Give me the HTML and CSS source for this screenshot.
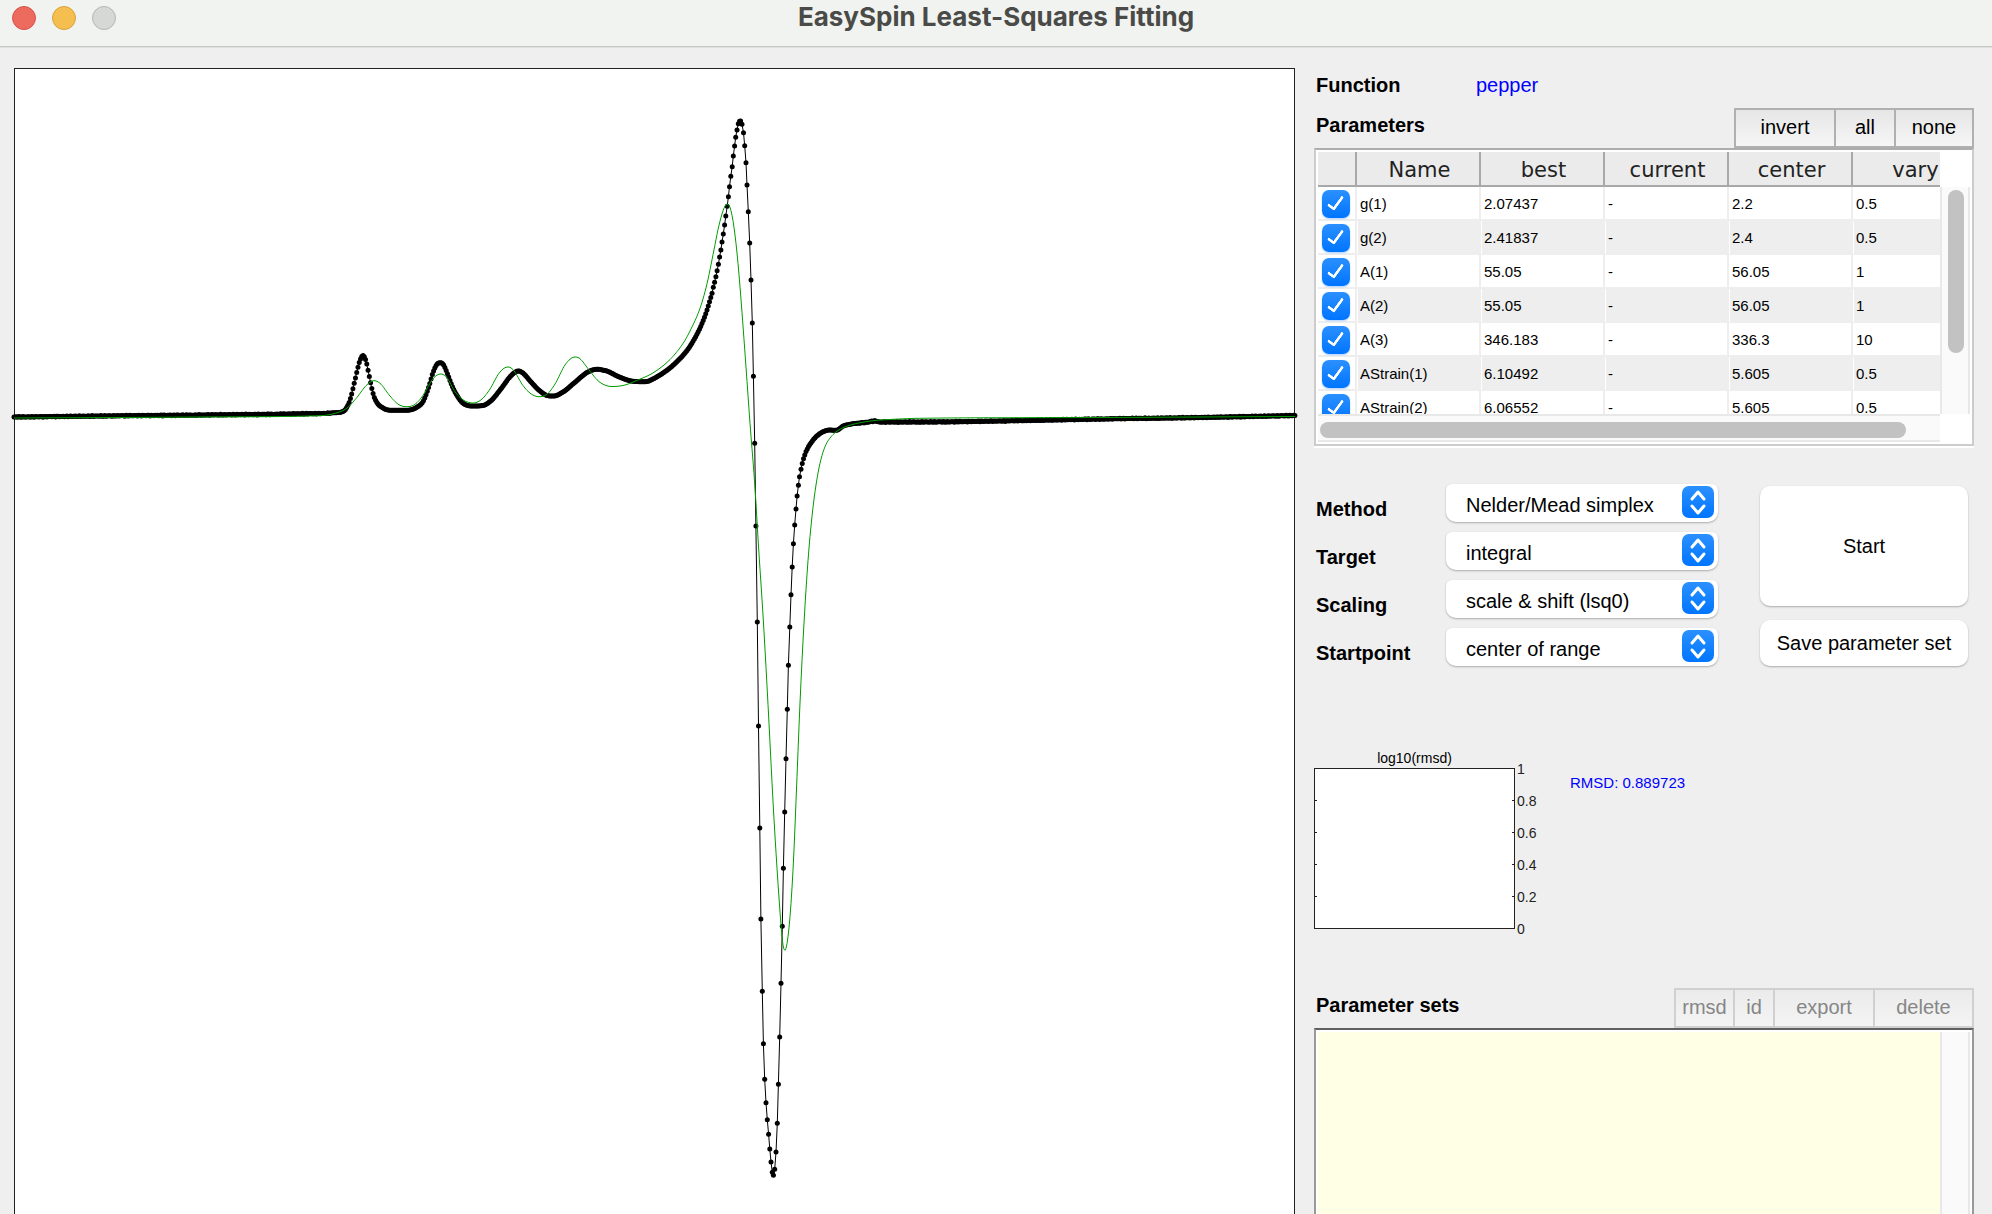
FILE: index.html
```html
<!DOCTYPE html>
<html lang="en">
<head>
    <meta charset="UTF-8">
    <title>EasySpin Least-Squares Fitting</title>
    <link rel="stylesheet" href="styles.css">
</head>
<body>
    <header class="titlebar">
        <div class="lights">
            <span class="light red"></span>
            <span class="light yellow"></span>
            <span class="light grey"></span>
        </div>
        <h1>EasySpin Least-Squares Fitting</h1>
    </header>

    <main class="window">
        <section class="plot">
            <svg id="spectrum" viewBox="15 69 1279 1145"></svg>
        </section>

        <section class="panel">
            <div class="function-row">
                <h2>Function</h2>
                <a href="#">pepper</a>
            </div>

            <div class="toolbar">
                <h2>Parameters</h2>
                <div class="buttons">
                    <button type="button" class="w-invert">invert</button>
                    <button type="button" class="w-all">all</button>
                    <button type="button" class="w-none">none</button>
                </div>
            </div>
            <div class="table-frame">
                <div class="table-view">
                    <table>
                        <colgroup>
                            <col class="col-check">
                            <col span="5" class="col-value">
                        </colgroup>
                        <thead>
                            <tr><th></th><th>Name</th><th>best</th><th>current</th><th>center</th><th>vary</th></tr>
                        </thead>
                        <tbody>
                            <tr><td><input type="checkbox" aria-label="g(1)" checked></td><td>g(1)</td><td>2.07437</td><td>-</td><td>2.2</td><td>0.5</td></tr>
                            <tr><td><input type="checkbox" aria-label="g(2)" checked></td><td>g(2)</td><td>2.41837</td><td>-</td><td>2.4</td><td>0.5</td></tr>
                            <tr><td><input type="checkbox" aria-label="A(1)" checked></td><td>A(1)</td><td>55.05</td><td>-</td><td>56.05</td><td>1</td></tr>
                            <tr><td><input type="checkbox" aria-label="A(2)" checked></td><td>A(2)</td><td>55.05</td><td>-</td><td>56.05</td><td>1</td></tr>
                            <tr><td><input type="checkbox" aria-label="A(3)" checked></td><td>A(3)</td><td>346.183</td><td>-</td><td>336.3</td><td>10</td></tr>
                            <tr><td><input type="checkbox" aria-label="AStrain(1)" checked></td><td>AStrain(1)</td><td>6.10492</td><td>-</td><td>5.605</td><td>0.5</td></tr>
                            <tr><td><input type="checkbox" aria-label="AStrain(2)" checked></td><td>AStrain(2)</td><td>6.06552</td><td>-</td><td>5.605</td><td>0.5</td></tr>
                        </tbody>
                    </table>
                </div>
                <div class="vscroll table-vscroll"><div class="vthumb"></div></div>
                <div class="hscroll"><div class="hthumb"></div></div>
            </div>

            <form class="options">
                <div class="fields">
                    <label for="method">Method</label>
                    <div class="popup">
                        <select id="method"><option>Nelder/Mead simplex</option></select>
                        <svg class="arrows" viewBox="0 0 32 32"><path d="M10 13l6-7 6 7M10 20l6 7 6-7"/></svg>
                    </div>
                    <label for="target">Target</label>
                    <div class="popup">
                        <select id="target"><option>integral</option></select>
                        <svg class="arrows" viewBox="0 0 32 32"><path d="M10 13l6-7 6 7M10 20l6 7 6-7"/></svg>
                    </div>
                    <label for="scaling">Scaling</label>
                    <div class="popup">
                        <select id="scaling"><option>scale &amp; shift (lsq0)</option></select>
                        <svg class="arrows" viewBox="0 0 32 32"><path d="M10 13l6-7 6 7M10 20l6 7 6-7"/></svg>
                    </div>
                    <label for="startpoint">Startpoint</label>
                    <div class="popup">
                        <select id="startpoint"><option>center of range</option></select>
                        <svg class="arrows" viewBox="0 0 32 32"><path d="M10 13l6-7 6 7M10 20l6 7 6-7"/></svg>
                    </div>
                </div>
                <div class="actions">
                    <button type="button" class="start">Start</button>
                    <button type="button" class="save">Save parameter set</button>
                </div>
            </form>

            <div class="progress">
                <figure class="rmsd-plot">
                    <figcaption>log10(rmsd)</figcaption>
                    <svg width="201" height="161" viewBox="0 0 201 161">
                        <rect x="0.5" y="0.5" width="200" height="160"/>
                        <path d="M0 32.5h3M0 64.5h3M0 96.5h3M0 128.5h3M198 32.5h3M198 64.5h3M198 96.5h3M198 128.5h3"/>
                    </svg>
                    <div class="axis">
                        <span>1</span>
                        <span>0.8</span>
                        <span>0.6</span>
                        <span>0.4</span>
                        <span>0.2</span>
                        <span>0</span>
                    </div>
                </figure>
                <p class="rmsd">RMSD: 0.889723</p>
            </div>

            <div class="toolbar">
                <h2>Parameter sets</h2>
                <div class="buttons">
                    <button type="button" class="w-rmsd" disabled>rmsd</button>
                    <button type="button" class="w-id" disabled>id</button>
                    <button type="button" class="w-export" disabled>export</button>
                    <button type="button" class="w-delete" disabled>delete</button>
                </div>
            </div>
            <div class="sets-frame">
                <select class="sets" aria-label="Parameter sets" multiple></select>
                <div class="vscroll"></div>
            </div>
        </section>
    </main>

    <script src="script.js"></script>
</body>
</html>
```
FILE: styles.css
```css
* { box-sizing: border-box; }
body { margin: 0; height: 100vh; display: flex; flex-direction: column; overflow: hidden; background: #efefef; color: #000; font-family: "Liberation Sans", Arial, sans-serif; font-size: 20px; }
h1, h2, p, figure { margin: 0; }
button, select, input { font: inherit; color: inherit; margin: 0; }

/* title bar */
.titlebar { flex: none; height: 48px; padding: 0 12px; display: grid; grid-template-columns: 1fr auto 1fr; background: #f0f3ef; border-bottom: 1px solid #e0e2e0; box-shadow: inset 0 -1px #c6c8c6; }
.titlebar h1 { font: bold 26px/34px Inter, sans-serif; color: #4a4b48; }
.lights { display: flex; gap: 16px; padding-top: 6px; }
.light { width: 24px; height: 24px; border-radius: 50%; border: 1px solid; }
.red { background: #ed6a5e; border-color: #d5544a; }
.yellow { background: #f5bf4f; border-color: #d9a13c; }
.grey { background: #d6d8d5; border-color: #b4b6b3; }

.window { flex: 1; min-height: 0; display: grid; grid-template-columns: 1fr 660px; gap: 19px; padding: 20px 18px 0 14px; }

/* spectrum */
.plot { min-width: 0; background: #fff; border: 1px solid #222; border-bottom: none; }
.plot svg { display: block; width: 100%; overflow: visible; }
.data { fill: none; stroke: #000; stroke-width: 1; }
.dots { fill: #000; }
.fit { fill: none; stroke: #009c00; stroke-width: 1; }

/* right side */
.panel { display: flex; flex-direction: column; min-height: 0; }
.panel h2 { font-size: 20px; line-height: 34px; padding-left: 2px; }
.function-row { flex: none; display: grid; grid-template-columns: 162px 1fr; margin-bottom: 6px; line-height: 34px; }
.function-row a { color: #00f; text-decoration: none; }
.toolbar { flex: none; height: 40px; display: flex; justify-content: space-between; align-items: flex-start; }
.buttons { display: flex; height: 40px; }
.buttons button { padding: 0 0 1px; border: 2px solid #b0b0b0; border-left: none; background: linear-gradient(#e6e6e6, #f6f6f6); }
.buttons button:first-child { border-left: 2px solid #b0b0b0; }
.buttons button:disabled { color: #868686; border-color: #d0d0d0; background: linear-gradient(#ebebeb, #f4f4f4); }
.w-invert { width: 102px; }
.w-all { width: 60px; }
.w-none { width: 78px; }
.w-rmsd { width: 61px; }
.w-id { width: 40px; }
.w-export { width: 100px; }
.w-delete { width: 99px; }

/* parameter table */
.table-frame { flex: none; display: grid; grid-template-columns: 1fr 30px; grid-template-rows: 262px 28px; padding: 2px; background: #fff; border: 2px solid #ccc; border-top-color: #adadad; box-shadow: 0 2px #fff; }
.table-view { overflow: hidden; }
table { width: 659px; table-layout: fixed; border-collapse: separate; border-spacing: 0; font-size: 15px; }
.col-check { width: 39px; }
.col-value { width: 124px; }
th { height: 35px; padding: 3px 0 0 3px; background: #ebebeb; border-right: 2px solid #a8a8a8; border-bottom: 2px solid #a8a8a8; font: 21px/24px "DejaVu Sans", sans-serif; color: #222; }
td { height: 34px; padding: 2px 0 0 3px; line-height: 28px; border-right: 2px solid #eee; border-bottom: 2px solid #eee; }
tr:nth-child(even) td { background: #eee; border-left: 1px solid #fff; padding-left: 2px; }
tr td:first-child, tr:nth-child(even) td:first-child { padding: 2px 0 0 4px; background: #fff; border-left: none; }
td input { display: block; appearance: none; width: 28px; height: 28px; border-radius: 7px; background: linear-gradient(#2b90ff, #0075ff); position: relative; box-shadow: 0 1px 2px #a8cfff; }
td input:checked::after { content: ""; position: absolute; left: 9px; top: 3px; width: 6px; height: 14px; border: solid #fff; border-width: 0 3px 3px 0; border-radius: 2px; transform: rotate(36deg); }
.vscroll { background: #fafafa; border: solid #e8e8e8; border-width: 0 2px; }
.table-vscroll { margin-top: 35px; padding: 3px 0 0 6px; }
.vthumb { width: 16px; height: 163px; border-radius: 8px; background: #c2c2c2; }
.hscroll { background: #fafafa; border: solid #e8e8e8; border-width: 2px 0; padding: 6px 34px 0 2px; }
.hthumb { height: 16px; border-radius: 8px; background: #c2c2c2; }

/* fit options */
.options { flex: none; display: flex; justify-content: space-between; margin-top: 38px; padding-right: 6px; }
.fields { display: grid; grid-template-columns: 132px 272px; grid-auto-rows: 38px; row-gap: 10px; }
.fields label { font-weight: bold; line-height: 26px; padding: 12px 0 0 2px; }
.popup { position: relative; }
.popup select { appearance: none; width: 100%; height: 38px; padding: 4px 40px 0 20px; border: none; border-radius: 6px 6px 10px 10px; background: #fff; box-shadow: 0 1px 2px #aaa; }
.arrows { position: absolute; right: 4px; top: 2px; width: 32px; height: 32px; border-radius: 7px; background: linear-gradient(#2b90ff, #0075ff); pointer-events: none; }
.arrows path { fill: none; stroke: #fff; stroke-width: 3; stroke-linecap: round; stroke-linejoin: round; }
.actions { display: flex; flex-direction: column; gap: 14px; width: 208px; padding-top: 2px; }
.actions button { padding: 0; border: none; border-radius: 10px; background: #fff; box-shadow: 0 1px 2px #aaa; }
.start { height: 120px; }
.save { height: 46px; }

/* rmsd history */
.progress { flex: none; display: flex; gap: 31px; margin: 84px 0 51px; }
.rmsd-plot { display: grid; grid-template-columns: 201px 24px; grid-template-rows: 18px 169px; font-size: 14px; line-height: 16px; }
.rmsd-plot figcaption { grid-column: 1 / 3; width: 201px; text-align: center; }
.rmsd-plot rect { fill: #fff; stroke: #222; }
.rmsd-plot path { stroke: #222; }
.axis { display: flex; flex-direction: column; justify-content: space-between; height: 176px; margin-top: -7px; padding-left: 2px; color: #222; }
.rmsd { color: #00f; font-size: 15px; line-height: 18px; padding-top: 24px; }

/* stored sets */
.sets-frame { flex: 1; min-height: 0; display: grid; grid-template-columns: 1fr 30px; padding: 2px 2px 0; background: #fff; border: 2px solid #999; border-top-color: #606060; border-bottom: none; }
.sets { width: 100%; height: 100%; padding: 0; border: none; border-radius: 0; background: #ffffe5; }
```
FILE: script.js
```js
// points are [x, y] in the coordinates of the spectrum's viewBox
const dataLeft = [[14,417],[100,416],[200,415],[300,413.8],[330,413],[343,411.5],[347,407],[350,400],[355,380],[359.5,361.7],[363,355.5],[366,361],[369,375],[371.7,388],[375,399],[383,408],[391.7,410.3],[406.7,410.3],[416.7,407.3],[423.3,401],[428.3,388.3],[433.3,371.7],[437.3,363.9],[440,362.7],[443.3,364.5],[447.7,374.3],[451.7,385],[456.7,395],[463.3,403.3],[471.7,406],[481.7,405.7],[491.7,400],[501.7,387.8],[511.7,375],[518.3,371],[523.3,373.3],[531.7,382.7],[540,391],[548.3,395.8],[553.3,396],[563.3,391.8],[575,382.2],[586.7,372.7],[596.7,369.3],[606.7,371],[620,377.3],[631.7,381],[645,381.7],[656.7,376.9],[671,367],[685,353],[692,343],[700,328],[706,313],[712.2,292.7]];
const dataSteep = [[713.3,287.3],[714.6,282.3],[715.9,276.7],[717.1,270.7],[718.4,264.3],[719.6,257],[720.9,250],[722,242],[723.3,234],[724.6,225],[725.8,216],[727.2,206.3],[728.4,196.7],[729.5,186.7],[730.8,176.3],[732.2,166.7],[733.3,156],[734.6,146],[735.7,137.3],[737,130],[738.3,123.7],[739.5,121.3],[740.6,121],[742,124.3],[743.5,132.7],[744.7,145.7],[746,162.7],[747,185],[748.3,211.7],[749.7,243],[751,280],[752.3,323],[753.4,376.3],[754.7,443.3],[755.9,526],[757.3,622],[758.5,726],[759.8,828],[760.9,919],[762.3,991.3],[763.4,1043.7],[764.7,1079.3],[766,1102.7],[767.3,1119.7],[768.6,1134.3],[769.8,1149],[771,1162],[772.3,1172.3],[773.4,1175.3],[774.7,1169.3],[776,1152],[777.3,1123.3],[778.4,1084.3],[779.7,1037],[781,983.3],[782.3,926.3],[783.4,868.3],[784.7,812],[786,758.7],[787.3,709.3],[788.4,665.3],[789.8,627],[791,594.7],[792.2,567],[793.4,543.7],[794.7,525],[796,509],[797.1,496],[798.4,485.3],[799.5,476.7]];
const dataRight = [[801,469.3],[802.7,461.7],[806,451.7],[810.7,443.3],[816.7,436],[823.3,431.7],[829.3,430],[836,430.3],[843.3,426],[853.3,423.7],[866.7,422.3],[875.3,421],[880,422],[920,422],[1000,421],[1100,419],[1200,417.5],[1295,415.5]];
const fit = [[14,418],[200,417],[320,415.7],[335,413.3],[346.7,408.3],[356.7,397.7],[366.7,385],[374,380.7],[380,383.3],[390,396],[398.3,404.3],[406.7,406.7],[415,404.3],[423.3,395],[433.3,378.3],[440.7,374],[446.7,377.3],[455,391.7],[463.3,400],[473.3,403],[481.7,399.3],[490,389],[498.3,374.3],[504,368.3],[508.3,367],[513.3,370],[523.3,386],[531.7,394.3],[539.3,396.7],[547.3,394],[555,384],[565,365],[571.7,358],[575.7,357],[580,358.7],[588.3,369],[598.3,381],[606.7,385.7],[613.3,386.5],[625,385],[636.7,380.5],[653.3,372.7],[670,359.5],[683.3,343],[690,331],[700,308.3],[706.7,285],[713.3,253.3],[718.3,228.3],[722.7,211.7],[725.3,205.7],[727.3,204.3],[730,207.3],[733.3,222.7],[736.7,250],[740,286.7],[745,353.3],[750,423.3],[755,488],[758.3,543],[763.3,620],[768.3,710],[773.3,806.7],[777.3,873],[779,898],[781,925],[782.7,943.3],[785,950.3],[787.3,941.7],[790,916.7],[793.3,864.5],[796.7,784],[800,703],[804,623],[808.3,556.7],[812.7,510],[816,485],[820,463.3],[825,446.7],[831.7,436],[840,429.3],[853.3,424.3],[873.3,420.7],[893.3,419.3],[920,418.3],[1100,417.5],[1295,416.5]];

// monotone cubic interpolation, sampled every `step`
function sample(points, step) {
    const n = points.length;
    const slope = [];
    for (let i = 0; i < n - 1; i++) {
        slope.push((points[i + 1][1] - points[i][1]) / (points[i + 1][0] - points[i][0]));
    }
    const tangent = points.map((p, i) => {
        if (i === 0) return slope[0];
        if (i === n - 1) return slope[n - 2];
        const a = slope[i - 1], b = slope[i];
        if (a * b <= 0) return 0;
        const limit = 3 * Math.min(Math.abs(a), Math.abs(b));
        return Math.sign(a) * Math.min(Math.abs(a + b) / 2, limit);
    });
    const out = [];
    let k = 0;
    for (let x = points[0][0]; x <= points[n - 1][0]; x += step) {
        while (k < n - 2 && x > points[k + 1][0]) k++;
        const h = points[k + 1][0] - points[k][0];
        const t = (x - points[k][0]) / h;
        const y = points[k][1] * (1 + 2 * t) * (1 - t) * (1 - t)
            + tangent[k] * h * t * (1 - t) * (1 - t)
            + points[k + 1][1] * t * t * (3 - 2 * t)
            + tangent[k + 1] * h * t * t * (t - 1);
        out.push([x, y]);
    }
    return out;
}

function add(parent, name, attrs) {
    const el = document.createElementNS("http://www.w3.org/2000/svg", name);
    for (const key in attrs) el.setAttribute(key, attrs[key]);
    parent.appendChild(el);
    return el;
}

const svg = document.getElementById("spectrum");
const step = 1.26;
const data = sample(dataLeft, step).concat(dataSteep, sample(dataRight, step));

add(svg, "polyline", { class: "data", points: data.join(" ") });
const dots = add(svg, "g", { class: "dots" });
data.forEach(([x, y], i) => {
    // a little measurement noise on the flat parts
    const noise = x < 330 || x > 860 ? Math.sin(i * 12.9) * Math.cos(i * 4.1) * 0.5 : 0;
    add(dots, "circle", { cx: x, cy: y + noise, r: 2.5 });
});
add(svg, "polyline", { class: "fit", points: sample(fit, 1).join(" ") });
```
